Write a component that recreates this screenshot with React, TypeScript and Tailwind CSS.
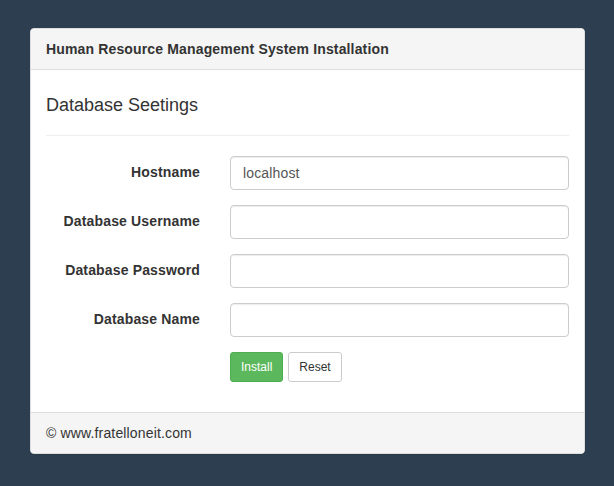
import { useState } from 'react';

const fields = [
    { name: 'hostname', label: 'Hostname', initial: 'localhost', type: 'text' },
    { name: 'username', label: 'Database Username', initial: '', type: 'text' },
    { name: 'password', label: 'Database Password', initial: '', type: 'password' },
    { name: 'database', label: 'Database Name', initial: '', type: 'text' },
];

export default function App() {
    const [values, setValues] = useState<Record<string, string>>(
        Object.fromEntries(fields.map((f) => [f.name, f.initial]))
    );

    const reset = () => setValues(Object.fromEntries(fields.map((f) => [f.name, f.initial])));

    return (
        <div className="min-h-[486px] bg-[#2c3e50] pt-[28px] pb-[32px] pl-[30px] pr-[29px] font-['Liberation_Sans',Arial,sans-serif] text-[14px] leading-[20px] tracking-[0.15px] text-[#333]">
            <div className="rounded-[4px] border border-[#ddd] bg-white shadow-[0_1px_1px_rgba(0,0,0,0.05)]">
                {/* Heading */}
                <div className="rounded-t-[3px] border-b border-[#ddd] bg-[#f5f5f5] px-[15px] py-[10px] font-bold">
                    Human Resource Management System Installation
                </div>

                {/* Body */}
                <form
                    className="px-[15px] pt-[25px] pb-[15px]"
                    onSubmit={(e) => e.preventDefault()}>
                    <h4 className="text-[18px] leading-[20px] font-normal tracking-normal">Database Seetings</h4>
                    <hr className="mt-[20px] mb-[20px] border-t border-[#eee]" />

                    {fields.map((f) => (
                        <div key={f.name} className="mb-[15px] grid grid-cols-[154px_1fr] gap-x-[30px]">
                            <label htmlFor={f.name} className="pt-[6px] text-right font-bold">
                                {f.label}
                            </label>
                            <input
                                id={f.name}
                                type={f.type}
                                value={values[f.name]}
                                onChange={(e) => setValues({ ...values, [f.name]: e.target.value })}
                                className="h-[34px] w-full rounded-[4px] border border-[#ccc] px-[12px] py-[6px] text-[14px] tracking-[0.15px] text-[#555] shadow-[inset_0_1px_1px_rgba(0,0,0,0.075)] outline-none"
                            />
                        </div>
                    ))}

                    <div className="mb-[15px] grid grid-cols-[154px_1fr] gap-x-[30px]">
                        <div />
                        <div className="flex gap-[5px] tracking-normal">
                            <button
                                type="submit"
                                className="h-[30px] rounded-[3px] border border-[#4cae4c] bg-[#5cb85c] px-[10px] text-[12px] leading-[18px] text-white">
                                Install
                            </button>
                            <button
                                type="button"
                                onClick={reset}
                                className="h-[30px] rounded-[3px] border border-[#ccc] bg-white px-[10px] text-[12px] leading-[18px] text-[#333]">
                                Reset
                            </button>
                        </div>
                    </div>
                </form>

                {/* Footer */}
                <div className="rounded-b-[3px] border-t border-[#ddd] bg-[#f5f5f5] px-[15px] py-[10px]">
                    © www.fratelloneit.com
                </div>
            </div>
        </div>
    );
}
